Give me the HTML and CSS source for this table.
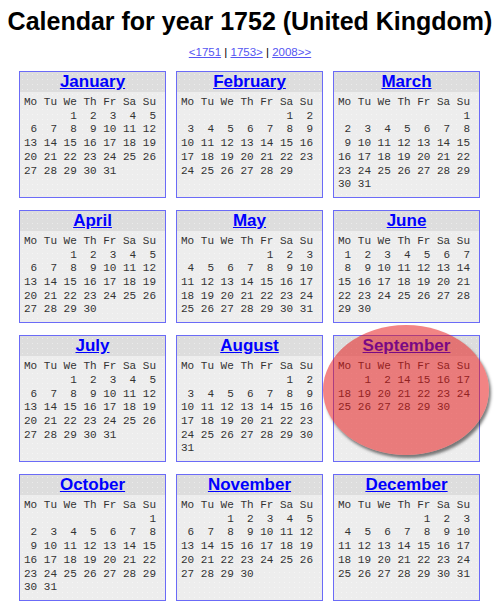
FILE: index.html
```html
<!DOCTYPE html>
<html lang="en">
<head>
<meta charset="utf-8">
<title>Calendar for year 1752 (United Kingdom)</title>
<link rel="stylesheet" href="styles.css">
</head>
<body>
<h1 class="title">Calendar for year 1752 (United Kingdom)</h1>
<p class="nav"><a href="#">&lt;1751</a> | <a href="#">1753&gt;</a> | <a href="#">2008&gt;&gt;</a></p>
<div class="grid">
  <div class="month">
    <div class="month-head"><a href="#">January</a></div>
<pre class="days">Mo Tu We Th Fr Sa Su
       1  2  3  4  5
 6  7  8  9 10 11 12
13 14 15 16 17 18 19
20 21 22 23 24 25 26
27 28 29 30 31</pre>
  </div>
  <div class="month">
    <div class="month-head"><a href="#">February</a></div>
<pre class="days">Mo Tu We Th Fr Sa Su
                1  2
 3  4  5  6  7  8  9
10 11 12 13 14 15 16
17 18 19 20 21 22 23
24 25 26 27 28 29</pre>
  </div>
  <div class="month">
    <div class="month-head"><a href="#">March</a></div>
<pre class="days">Mo Tu We Th Fr Sa Su
                   1
 2  3  4  5  6  7  8
 9 10 11 12 13 14 15
16 17 18 19 20 21 22
23 24 25 26 27 28 29
30 31</pre>
  </div>
  <div class="month">
    <div class="month-head"><a href="#">April</a></div>
<pre class="days">Mo Tu We Th Fr Sa Su
       1  2  3  4  5
 6  7  8  9 10 11 12
13 14 15 16 17 18 19
20 21 22 23 24 25 26
27 28 29 30</pre>
  </div>
  <div class="month">
    <div class="month-head"><a href="#">May</a></div>
<pre class="days">Mo Tu We Th Fr Sa Su
             1  2  3
 4  5  6  7  8  9 10
11 12 13 14 15 16 17
18 19 20 21 22 23 24
25 26 27 28 29 30 31</pre>
  </div>
  <div class="month">
    <div class="month-head"><a href="#">June</a></div>
<pre class="days">Mo Tu We Th Fr Sa Su
 1  2  3  4  5  6  7
 8  9 10 11 12 13 14
15 16 17 18 19 20 21
22 23 24 25 26 27 28
29 30</pre>
  </div>
  <div class="month">
    <div class="month-head"><a href="#">July</a></div>
<pre class="days">Mo Tu We Th Fr Sa Su
       1  2  3  4  5
 6  7  8  9 10 11 12
13 14 15 16 17 18 19
20 21 22 23 24 25 26
27 28 29 30 31</pre>
  </div>
  <div class="month">
    <div class="month-head"><a href="#">August</a></div>
<pre class="days">Mo Tu We Th Fr Sa Su
                1  2
 3  4  5  6  7  8  9
10 11 12 13 14 15 16
17 18 19 20 21 22 23
24 25 26 27 28 29 30
31</pre>
  </div>
  <div class="month">
    <div class="month-head"><a href="#">September</a></div>
<pre class="days">Mo Tu We Th Fr Sa Su
    1  2 14 15 16 17
18 19 20 21 22 23 24
25 26 27 28 29 30</pre>
    <div class="highlight"></div>
  </div>
  <div class="month">
    <div class="month-head"><a href="#">October</a></div>
<pre class="days">Mo Tu We Th Fr Sa Su
                   1
 2  3  4  5  6  7  8
 9 10 11 12 13 14 15
16 17 18 19 20 21 22
23 24 25 26 27 28 29
30 31</pre>
  </div>
  <div class="month">
    <div class="month-head"><a href="#">November</a></div>
<pre class="days">Mo Tu We Th Fr Sa Su
       1  2  3  4  5
 6  7  8  9 10 11 12
13 14 15 16 17 18 19
20 21 22 23 24 25 26
27 28 29 30</pre>
  </div>
  <div class="month">
    <div class="month-head"><a href="#">December</a></div>
<pre class="days">Mo Tu We Th Fr Sa Su
             1  2  3
 4  5  6  7  8  9 10
11 12 13 14 15 16 17
18 19 20 21 22 23 24
25 26 27 28 29 30 31</pre>
  </div>
</div>
</body>
</html>
```

FILE: styles.css
```css
* { box-sizing: border-box; }

html, body {
  margin: 0;
  background: #ffffff;
}

body {
  font-family: "Liberation Sans", Arial, sans-serif;
  color: #000000;
  padding-top: 6px;
}

.title {
  margin: 0;
  font-size: 25px;
  line-height: 30px;
  font-weight: bold;
  text-align: center;
}

.nav {
  margin: 9px 0 0;
  font-size: 11.5px;
  line-height: 14px;
  text-align: center;
}

.nav a {
  color: #5555f2;
}

.grid {
  display: grid;
  grid-template-columns: repeat(3, 147px);
  column-gap: 10px;
  row-gap: 12px;
  margin: 12px 0 0 19px;
}

.month {
  position: relative;
  border: 1px solid #6b6bf7;
  background-color: #ededed;
  background-image: radial-gradient(circle, rgba(255, 255, 255, 0.45) 0.6px, transparent 0.9px);
  background-size: 5px 5px;
}

.month-head {
  height: 20px;
  background-color: #dddddd;
  background-image: radial-gradient(circle, rgba(255, 255, 255, 0.4) 0.6px, transparent 0.9px);
  background-size: 5px 5px;
  text-align: center;
  font-size: 17px;
  font-weight: bold;
  line-height: 20px;
}

.month-head a {
  color: #0000ff;
}

.days {
  margin: 0;
  padding: 4px 4px 5px;
  font-family: "Liberation Mono", "Courier New", monospace;
  font-size: 11px;
  line-height: 13.7px;
  color: #333333;
}

.highlight {
  position: absolute;
  left: -11px;
  top: -11px;
  width: 166px;
  height: 130px;
  border-radius: 50%;
  background: rgba(230, 20, 20, 0.52);
  box-shadow: 2px 3px 3px rgba(0, 0, 0, 0.5);
  pointer-events: none;
}
```
